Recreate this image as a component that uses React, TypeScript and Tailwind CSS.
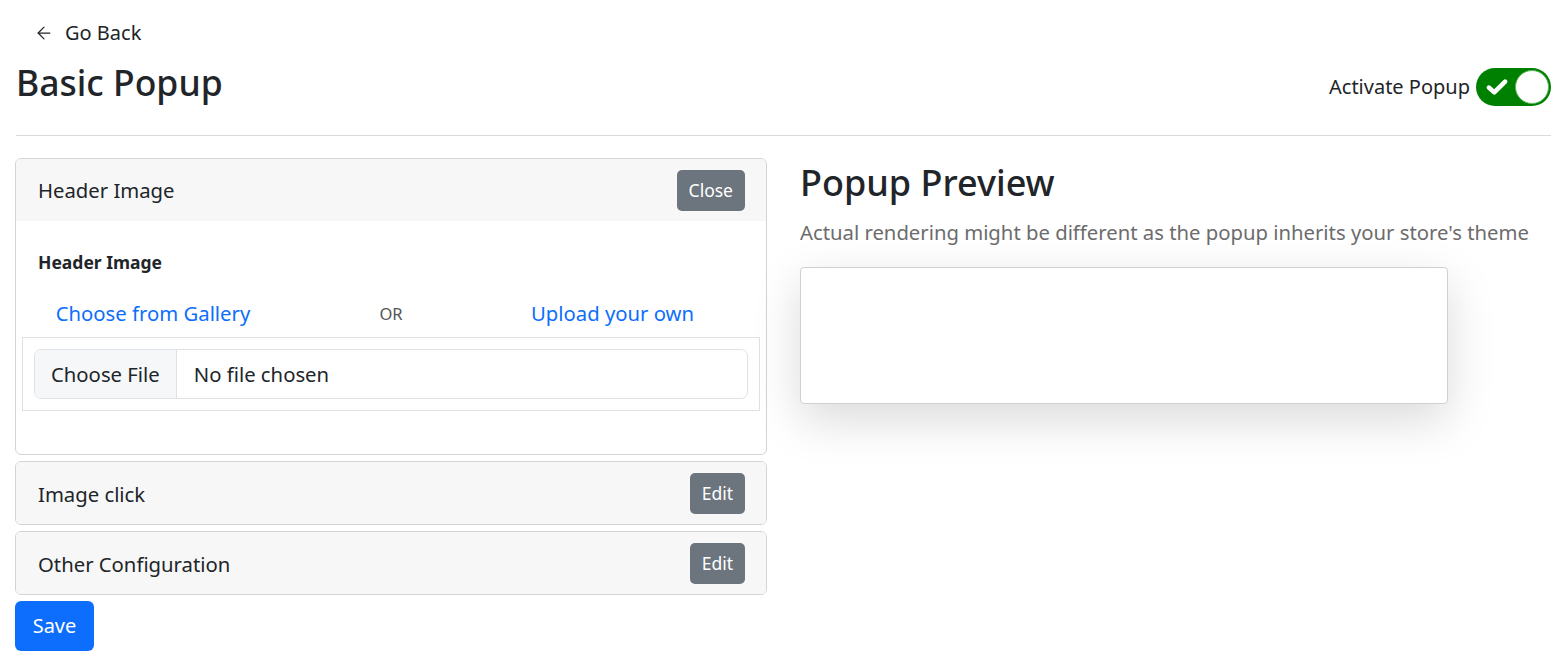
import { ArrowLeft } from "lucide-react";

const font = { fontFamily: '"Noto Sans", "Open Sans", sans-serif' };

interface SectionProps {
  title: string;
  action: string;
  open?: boolean;
  children?: React.ReactNode;
}

const Section = ({ title, action, open, children }: SectionProps) => (
  <div className="border border-[#d4d4d4] rounded-[6px] overflow-hidden">
    <div className="flex items-center justify-between bg-[#f7f7f7] h-[62px] pl-[22px] pr-[21px]">
      <span className="text-[20.3px] text-[#212529] mt-[1px]">{title}</span>
      <button className="bg-[#6c757d] text-white text-[17.5px] rounded-[5px] h-[41px] px-[12px]">
        {action}
      </button>
    </div>
    {open && children}
  </div>
);

const App = () => {
  return (
    <div className="min-h-[665px] bg-white text-[#212529] px-[15px]" style={font}>
      {/* back link */}
      <div className="flex items-center gap-[11px] pl-[19px] pt-[16px] h-[50px] text-[20px]">
        <ArrowLeft className="h-[20px] w-[20px]" strokeWidth={1.5} />
        <span>Go Back</span>
      </div>

      {/* title row */}
      <div className="flex items-center justify-between h-[66px]">
        <h1 className="text-[35.5px] font-medium leading-none pl-[1px]">Basic Popup</h1>
        <div className="flex items-center gap-[6px] mt-[8px]">
          <span className="text-[20px]">Activate Popup</span>
          <div className="w-[75px] h-[38px] rounded-full bg-[#008000] flex items-center justify-between px-[2px]">
            <svg viewBox="0 0 24 24" className="w-[26px] h-[26px] ml-[6px]" fill="none" stroke="white" strokeWidth={4.2} strokeLinecap="round" strokeLinejoin="round">
              <path d="M4.5 12.5l5 4.5L19.5 7" />
            </svg>
            <div className="w-[34px] h-[34px] rounded-full bg-white border border-[#5cb85c]" />
          </div>
        </div>
      </div>

      <hr className="border-t border-[#dadada] mt-[19px] ml-[1px]" />

      <div className="flex mt-[22px]">
        {/* left column */}
        <div className="w-[752px] flex flex-col gap-[6px]">
          <Section title="Header Image" action="Close" open>
            <div className="px-[6px] pt-[28px] pb-[43px]">
              <div className="pl-[16px] text-[17.5px] font-bold">Header Image</div>
              <div className="grid grid-cols-3 items-center mt-[20px] h-[42px] pb-[7px]">
                <a className="text-[20.3px] text-[#0d6efd] text-center pl-[16px]">Choose from Gallery</a>
                <span className="text-[16.5px] text-[#555] text-center mt-[3px]">OR</span>
                <a className="text-[20.3px] text-[#0d6efd] pl-[17px]">Upload your own</a>
              </div>
              <div className="border border-[#dee2e6] p-[11px]">
                <div className="flex h-[50px] border border-[#dee2e6] rounded-[7px] overflow-hidden text-[20.3px]">
                  <div className="bg-[#f6f7f9] border-r border-[#dee2e6] flex items-center px-[16px]">Choose File</div>
                  <div className="flex items-center pl-[17px]">No file chosen</div>
                </div>
              </div>
            </div>
          </Section>
          <Section title="Image click" action="Edit" />
          <Section title="Other Configuration" action="Edit" />
          <div>
            <button className="bg-[#0d6efd] text-white text-[20px] rounded-[6px] h-[50px] w-[79px]">
              Save
            </button>
          </div>
        </div>

        {/* right column */}
        <div className="ml-[33px] flex-1">
          <h2 className="text-[36px] font-medium leading-none mt-[7px]">Popup Preview</h2>
          <p className="text-[20.3px] text-[#6c6c6c] mt-[16px]">
            Actual rendering might be different as the popup inherits your store's theme
          </p>
          <div className="w-[648px] h-[137px] mt-[20px] border border-[#d0d0d0] rounded-[4px] bg-white shadow-[0_16px_48px_rgba(0,0,0,0.15)]" />
        </div>
      </div>
    </div>
  );
};

export default App;
